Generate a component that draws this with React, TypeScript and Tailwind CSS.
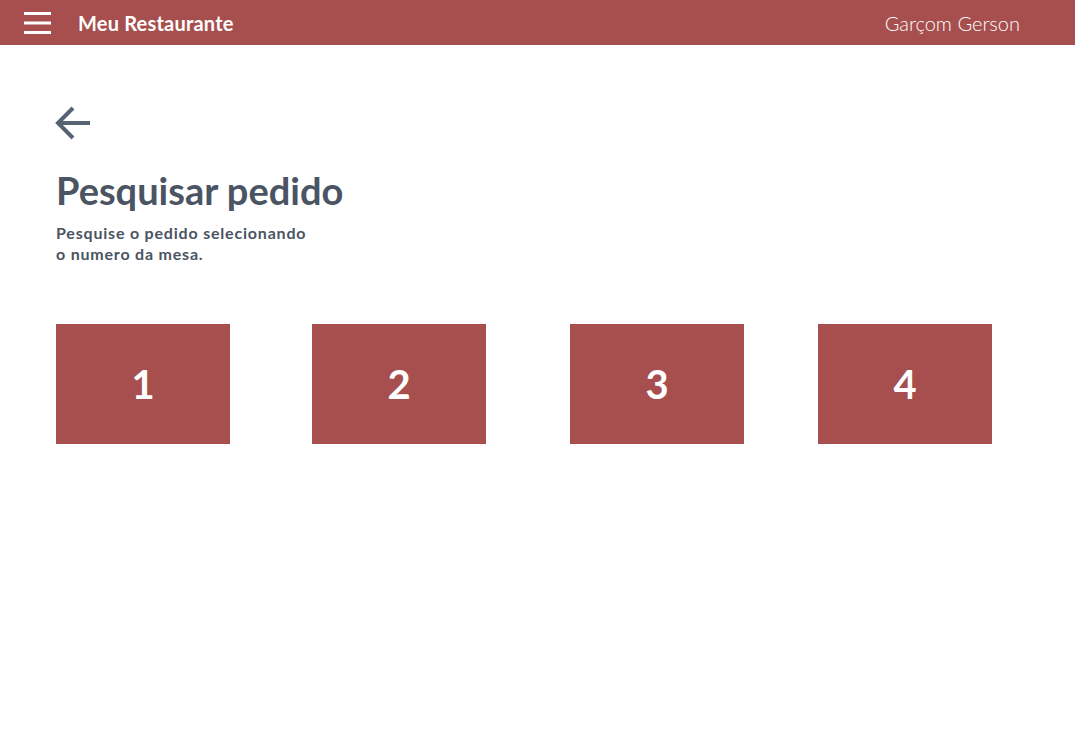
import React from "react";

export default function App() {
  const font = { fontFamily: "Lato, 'Noto Sans', sans-serif" };
  return (
    <div className="min-h-[748px] w-full bg-white font-['Lato',sans-serif]" style={font}>
      <header className="flex h-[45px] items-center bg-[#a64f4e] pl-[24px] pr-[55px] text-white">
        <svg width="28" height="24" viewBox="0 0 28 24" className="shrink-0">
          <rect x="0" y="1" width="27" height="3" fill="#fff" />
          <rect x="0" y="10.5" width="27" height="3" fill="#fff" />
          <rect x="0" y="20" width="27" height="3" fill="#fff" />
        </svg>
        <span className="ml-[26px] text-[20px] font-bold leading-none tracking-[0.2px]">Meu Restaurante</span>
        <span className="ml-auto text-[20px] font-light leading-none">Garçom Gerson</span>
      </header>
      <main className="px-[56px] pt-[58px]">
        <svg width="40" height="40" viewBox="0 0 40 40" className="-ml-[2px]">
          <path d="M36 20H4M19 5L4 20l15 15" stroke="#566372" strokeWidth="4" fill="none" strokeLinecap="butt" />
        </svg>
        <h1 className="mt-[24px] text-[38px] font-bold leading-[46px] text-[#4a5462]">Pesquisar pedido</h1>
        <p className="mt-[9px] text-[16px] font-bold leading-[21px] tracking-[0.8px] text-[#4a5462]">
          Pesquise o pedido selecionando
          <br />o numero da mesa.
        </p>
        <div className="mt-[60px] flex">
          <button className="flex h-[120px] w-[174px] items-center justify-center bg-[#a64f4e] text-[40px] font-bold text-white">1</button>
          <button className="ml-[82px] flex h-[120px] w-[174px] items-center justify-center bg-[#a64f4e] text-[40px] font-bold text-white">2</button>
          <button className="ml-[84px] flex h-[120px] w-[174px] items-center justify-center bg-[#a64f4e] text-[40px] font-bold text-white">3</button>
          <button className="ml-[74px] flex h-[120px] w-[174px] items-center justify-center bg-[#a64f4e] text-[40px] font-bold text-white">4</button>
        </div>
      </main>
    </div>
  );
}
